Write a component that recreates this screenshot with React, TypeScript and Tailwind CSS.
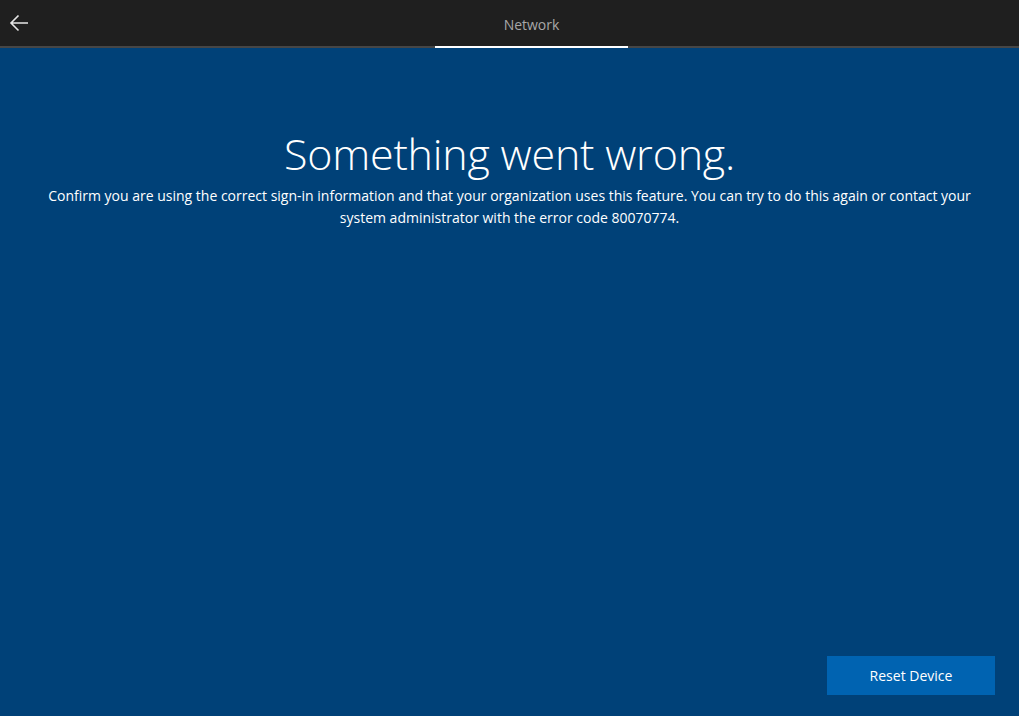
export default function App() {
  return (
    <div className="h-[716px] w-[1019px] flex flex-col bg-[#004178] overflow-hidden" style={{ fontFamily: '"Open Sans", "Noto Sans", sans-serif' }}>
      {/* Header */}
      <div className="h-[48px] shrink-0 bg-[#1f1f1f] border-b-2 border-[#464646] relative flex items-center">
        <button className="ml-[9px] text-[#e6e6e6]" aria-label="Back">
          <svg width="20" height="20" viewBox="0 0 20 20" fill="none" stroke="currentColor" strokeWidth="1.6">
            <path d="M19 10H2M9.5 2.5L2 10l7.5 7.5" />
          </svg>
        </button>
        <div className="absolute left-[435px] w-[193px] top-0 h-[48px] flex items-center justify-center text-[14px] text-[#a8a8a8]">
          Network
        </div>
        <div className="absolute left-[435px] w-[193px] -bottom-[2px] h-[2px] bg-white" />
      </div>

      {/* Body */}
      <div className="flex-1 flex flex-col px-[40px]">
        <h1 className="mt-[78px] text-center text-white text-[43px] font-light leading-[56px] tracking-[-0.2px]">
          Something went wrong.
        </h1>
        <p className="mt-[3px] text-center text-white text-[14px] leading-[22px]">
          Confirm you are using the correct sign-in information and that your organization uses this feature. You can try to do this again or contact your system administrator with the error code 80070774.
        </p>
        <div className="flex-1" />
        <div className="flex justify-end pb-[21px] mr-[-16px]">
          <button className="w-[168px] h-[39px] bg-[#0063b1] text-white text-[14px]">Reset Device</button>
        </div>
      </div>
    </div>
  )
}
